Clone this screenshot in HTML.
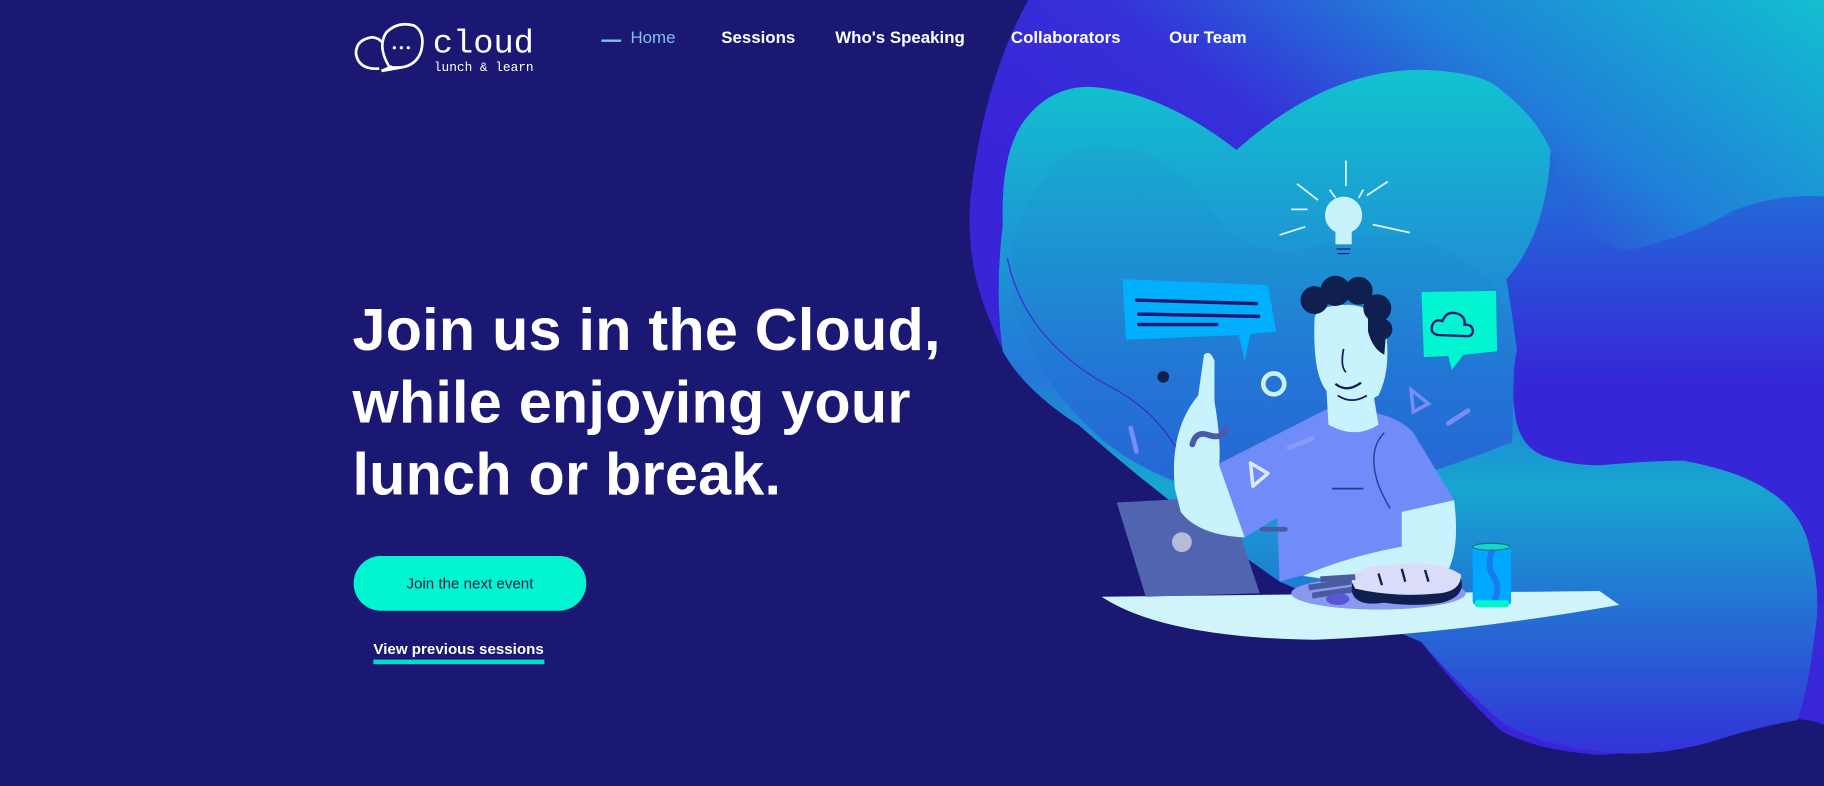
<!DOCTYPE html>
<html><head><meta charset="utf-8"><style>
*{margin:0;padding:0;box-sizing:border-box}
html,body{width:1824px;height:786px;overflow:hidden;background:#1a1873}
#w{position:absolute;left:0;top:0;width:1568px;height:676px;transform:scale(1.16327);transform-origin:0 0;font-family:"Liberation Sans",sans-serif}
svg.bg{position:absolute;left:0;top:0}
.nav{position:absolute;top:25px;font-size:14.5px;font-weight:bold;color:#fff;white-space:nowrap}
h1{position:absolute;left:303px;top:253px;font-size:51px;line-height:62px;color:#fff;font-weight:bold;letter-spacing:0.2px}
.btn{position:absolute;left:304px;top:478px;width:200px;height:47px;border-radius:24px;background:#00f5d0;color:#1a1a3a;font-size:13px;text-align:center;line-height:47px}
.link{position:absolute;left:321px;top:550px;font-size:13px;color:#fff;font-weight:bold}
.bar{position:absolute;left:321px;top:567px;width:147px;height:4px;background:#00e0d0}
</style></head><body><div id="w">
<svg class="bg" width="1568" height="676" viewBox="0 0 1568 676">
<defs>
<linearGradient id="g1" gradientUnits="userSpaceOnUse" x1="1560" y1="0" x2="1250" y2="420"><stop offset="0" stop-color="#13bdd0"/><stop offset="0.4" stop-color="#2080d8"/><stop offset="0.7" stop-color="#3530d8"/><stop offset="1" stop-color="#3a24d8"/></linearGradient>
<linearGradient id="gb" gradientUnits="userSpaceOnUse" x1="0" y1="170" x2="0" y2="330"><stop offset="0" stop-color="#2468d8"/><stop offset="1" stop-color="#3626d8"/></linearGradient>
<linearGradient id="g2" gradientUnits="userSpaceOnUse" x1="0" y1="60" x2="0" y2="640"><stop offset="0" stop-color="#12c2cf"/><stop offset="0.45" stop-color="#2478d8"/><stop offset="0.62" stop-color="#17a6d0"/><stop offset="1" stop-color="#3236d8"/></linearGradient>
<linearGradient id="g3" x1="0" y1="0" x2="0" y2="1"><stop offset="0" stop-color="#17aacf"/><stop offset="1" stop-color="#2a55d8"/></linearGradient>
</defs>
<path d="M884 0 L1568 0 L1568 623 Q1540 612 1500 625 Q1440 645 1376 649 Q1320 645 1290 628 Q1250 590 1222 552 L1100 500 Q1000 420 928 366 Q870 330 853 280 Q830 230 834 172 Q845 70 884 0 Z" fill="url(#g1)"/>
<path d="M1333 129 Q1345 205 1399 215 Q1450 205 1490 181 Q1530 166 1568 169 L1568 520 L1300 520 L1295 200 Z" fill="url(#gb)"/>
<path d="M862 194 Q860 130 881 103 Q905 72 942 75 Q1000 80 1063 129 Q1140 60 1222 60 Q1275 62 1290 77 Q1320 100 1333 129 Q1330 200 1295 240 Q1300 270 1304 301 Q1298 330 1302 353 Q1305 385 1330 393 Q1350 400 1376 400 Q1420 396 1447 396 Q1495 405 1519 421 Q1550 440 1556 473 Q1566 510 1560 545 Q1555 590 1545 619 Q1510 625 1470 638 Q1420 652 1376 646 Q1320 640 1290 620 Q1250 585 1222 552 L1100 500 Q1000 430 928 366 Q880 335 862 302 Q855 250 862 194 Z" fill="url(#g2)"/>
<path d="M867 237 Q870 190 890 164 Q910 127 942 125 Q975 125 998 138 Q1030 160 1054 198 Q1080 218 1115 215 Q1170 200 1208 203 Q1255 215 1279 241 Q1300 265 1302 300 L1300 380 Q1200 420 1100 440 Q1000 420 950 380 Q880 320 867 237 Z" fill="url(#g3)" opacity="0.85"/>
<path d="M866 222 Q880 290 950 330 Q1010 360 1025 420" stroke="#3a2ad0" stroke-width="1" fill="none"/>
<!-- desk -->
<path d="M947 513 L1375 508 L1392 520 Q1250 545 1130 550 Q1000 548 947 513 Z" fill="#cff5fb"/>
<!-- laptop -->
<path d="M960 432 L1055 427 L1083 510 L985 513 Z" fill="#5064b0"/>
<circle cx="1016" cy="466" r="8.5" fill="#b4bcdc"/>
<!-- shirt -->
<path d="M1045 400 L1140 352 Q1195 350 1215 372 L1250 430 L1205 440 L1208 470 L1100 500 L1098 445 L1070 462 Z" fill="#6f8cf8"/>
<path d="M1075 398 l15 9 l-13 11 z" fill="none" stroke="#e0eaff" stroke-width="3" stroke-linejoin="round"/>
<path d="M1190 372 q-15 15 -5 45 q5 12 10 20" stroke="#2a3a90" stroke-width="1.2" fill="none"/>
<line x1="1145" y1="420" x2="1172" y2="420" stroke="#2a3a90" stroke-width="1.5"/>
<line x1="1085" y1="455" x2="1105" y2="455" stroke="#4a5aa8" stroke-width="4" stroke-linecap="round"/>
<!-- arms -->
<path d="M1010 420 Q1005 370 1030 340 L1035 305 Q1040 300 1044 310 L1044 345 Q1050 380 1048 400 L1070 462 Q1030 460 1015 440 Z" fill="#c9f3fc"/>
<path d="M1205 440 L1250 430 Q1255 470 1245 490 Q1200 500 1140 498 L1120 495 Q1160 478 1205 470 Z" fill="#c9f3fc"/>
<path d="M1025 382 q3 -12 14 -8 q12 4 15 -6" stroke="#4a5aa8" stroke-width="5" fill="none" stroke-linecap="round"/>
<!-- neck & head -->
<path d="M1140 330 L1180 335 L1185 365 Q1165 378 1142 365 Z" fill="#c9f3fc"/>
<path d="M1130 275 Q1128 330 1145 340 Q1165 352 1185 340 Q1195 320 1192 290 Q1190 265 1160 262 Q1130 262 1130 275 Z" fill="#c9f3fc"/>
<g fill="#0f1f50"><circle cx="1130" cy="258" r="12"/><circle cx="1148" cy="250" r="13"/><circle cx="1168" cy="250" r="12"/><circle cx="1184" cy="265" r="12"/><circle cx="1188" cy="283" r="9"/><path d="M1176 270 L1192 280 L1190 305 Q1180 300 1176 285 Z"/></g>
<path d="M1155 300 q-3 15 2 20" stroke="#0f1f50" stroke-width="1.5" fill="none"/>
<path d="M1148 330 q10 8 22 -1" stroke="#0f1f50" stroke-width="2" fill="none"/>
<path d="M1150 340 q12 8 25 0" stroke="#0f1f50" stroke-width="1.5" fill="none"/>
<!-- bulb -->
<circle cx="1155" cy="185" r="16" fill="#c9f3fc"/>
<rect x="1148" y="196" width="14" height="14" fill="#c9f3fc"/>
<g stroke="#1a1873" stroke-width="1"><line x1="1149" y1="214" x2="1161" y2="214"/><line x1="1150" y1="218" x2="1160" y2="218"/></g>
<g stroke="#e0f6ff" stroke-width="1.5"><line x1="1157" y1="138" x2="1157" y2="160"/><line x1="1115" y1="158" x2="1133" y2="172"/><line x1="1175" y1="168" x2="1193" y2="156"/><line x1="1100" y1="202" x2="1122" y2="195"/><line x1="1180" y1="193" x2="1212" y2="200"/><line x1="1110" y1="180" x2="1124" y2="180"/><line x1="1143" y1="163" x2="1148" y2="170"/><line x1="1168" y1="170" x2="1172" y2="163"/></g>
<!-- bubbles -->
<path d="M965 240 L1090 245 L1097 285 L1075 287 L1070 310 L1065 288 L968 292 Z" fill="#00b0ff"/>
<g stroke="#1a1873" stroke-width="3" stroke-linecap="round"><line x1="977" y1="258" x2="1080" y2="261"/><line x1="979" y1="270" x2="1082" y2="272"/><line x1="979" y1="279" x2="1046" y2="279"/></g>
<path d="M1222 251 L1286 250 L1287 302 L1258 305 L1248 318 L1245 306 L1224 307 Z" fill="#00f5d0"/>
<path d="M1236 288 q-8 -2 -4 -10 q3 -4 8 -2 q4 -10 14 -6 q6 3 5 9 q8 0 7 7 q-1 3 -5 3 z" fill="none" stroke="#1a1873" stroke-width="2"/>
<circle cx="1000" cy="324" r="5" fill="#0f1f50"/>
<circle cx="1095" cy="330" r="9" fill="none" stroke="#c9f3fc" stroke-width="4"/>
<path d="M1213 335 l15 12 l-13 7 z" fill="none" stroke="#7a8df5" stroke-width="3"/>
<line x1="1245" y1="364" x2="1262" y2="353" stroke="#7a8df5" stroke-width="4" stroke-linecap="round"/>
<line x1="972" y1="368" x2="977" y2="388" stroke="#7a8df5" stroke-width="4" stroke-linecap="round"/>
<line x1="1108" y1="385" x2="1128" y2="377" stroke="#8a9cf8" stroke-width="4" stroke-linecap="round"/>
<!-- plate, bread, can -->
<ellipse cx="1185" cy="510" rx="75" ry="14" fill="#8a98f0"/>
<path d="M1162 508 Q1160 490 1190 487 Q1230 482 1255 495 Q1262 512 1240 518 Q1215 522 1190 518 Q1165 522 1162 508 Z" fill="#0f1f50"/>
<path d="M1162 500 Q1165 485 1195 486 Q1235 480 1256 494 Q1256 508 1238 510 Q1200 514 1165 506 Z" fill="#dadcf8"/>
<g stroke="#0f1f50" stroke-width="2"><line x1="1185" y1="493" x2="1188" y2="503"/><line x1="1205" y1="489" x2="1208" y2="500"/><line x1="1225" y1="490" x2="1228" y2="500"/></g>
<g stroke="#4a5aa0" stroke-width="5"><line x1="1125" y1="505" x2="1162" y2="500"/><line x1="1128" y1="512" x2="1162" y2="507"/><line x1="1135" y1="498" x2="1165" y2="496"/></g>
<ellipse cx="1150" cy="515" rx="10" ry="5" fill="#5a55d0"/>
<rect x="1266" y="470" width="33" height="50" rx="3" fill="#00a8ff"/>
<path d="M1283 472 q-6 15 2 25 q5 10 -2 23" stroke="#1a7af0" stroke-width="5" fill="none"/>
<ellipse cx="1282" cy="470" rx="16" ry="3" fill="#13d8c8" stroke="#0f6f8a"/>
<rect x="1268" y="516" width="29" height="6" rx="2" fill="#00f5d0"/>
<!-- logo -->
<g fill="none" stroke="#fff" stroke-width="2.3">
<path d="M326 59 Q308 60 306 46 Q306 34 320 32 Q326 33 328 36"/>
<path d="M335 58 Q324 40 332 28 Q342 18 356 22 Q366 28 362 44 Q358 56 345 58 Z"/>
<path d="M337 57 L328 61 L345 58"/>
</g>
<g fill="#fff"><circle cx="339" cy="41" r="1.4"/><circle cx="345" cy="41" r="1.4"/><circle cx="351" cy="41" r="1.4"/></g>
<text x="372" y="45" fill="#fff" font-family="Liberation Mono,monospace" font-size="29">cloud</text>
<text x="373" y="61" fill="#fff" font-family="Liberation Mono,monospace" font-size="11">lunch &amp; learn</text>
<line x1="517" y1="35" x2="534" y2="35" stroke="#7fc4ea" stroke-width="2"/>
</svg>
<div class="nav" style="left:542px;color:#7fc4ea;font-weight:normal">Home</div>
<div class="nav" style="left:620px">Sessions</div>
<div class="nav" style="left:718px">Who's Speaking</div>
<div class="nav" style="left:869px">Collaborators</div>
<div class="nav" style="left:1005px">Our Team</div>
<h1>Join us in the Cloud,<br>while enjoying your<br>lunch or break.</h1>
<div class="btn">Join the next event</div>
<div class="link">View previous sessions</div>
<div class="bar"></div>
</div></body></html>
